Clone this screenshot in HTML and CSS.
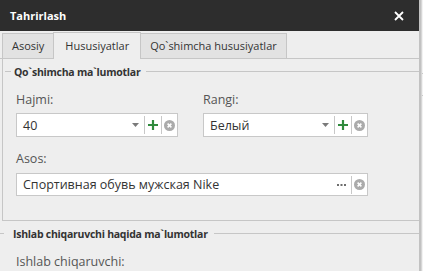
FILE: index.html
```html
<!DOCTYPE html>
<html lang="uz">
<head>
  <meta charset="UTF-8" />
  <meta name="viewport" content="width=device-width, initial-scale=1.0" />
  <title>Tahrirlash</title>
  <link rel="stylesheet" href="styles.css">
</head>
<body>
  <div class="dialog">
    <div class="titlebar">
      <span class="title">Tahrirlash</span>
      <button class="close" title="Yopish">
        <svg width="10" height="10" viewBox="0 0 10 10"><path d="M1 1L9 9M9 1L1 9" stroke="#fff" stroke-width="1.8"/></svg>
      </button>
    </div>

    <div class="tabs">
      <div class="tab">Asosiy</div>
      <div class="tab active">Hususiyatlar</div>
      <div class="tab">Qo`shimcha hususiyatlar</div>
    </div>

    <div class="page">
      <div class="caption"><span>Qo`shimcha ma`lumotlar</span></div>

      <div class="row">
        <div class="field">
          <label>Hajmi:</label>
          <div class="editor">
            <span class="value">40</span>
            <span class="btn arrow"><svg width="7" height="4" viewBox="0 0 7 4"><path d="M0 0H7L3.5 4Z" fill="#7a7a7a"/></svg></span>
            <span class="btn sep plus"><svg width="10" height="10" viewBox="0 0 10 10"><path d="M5 0V10M0 5H10" stroke="#2f8a3c" stroke-width="2.2"/></svg></span>
            <span class="btn sep clear"><svg width="11" height="11" viewBox="0 0 11 11"><circle cx="5.5" cy="5.5" r="5.5" fill="#ababab"/><path d="M3.6 3.6L7.4 7.4M7.4 3.6L3.6 7.4" stroke="#fff" stroke-width="1.5"/></svg></span>
          </div>
        </div>
        <div class="field">
          <label>Rangi:</label>
          <div class="editor">
            <span class="value">Белый</span>
            <span class="btn arrow"><svg width="7" height="4" viewBox="0 0 7 4"><path d="M0 0H7L3.5 4Z" fill="#7a7a7a"/></svg></span>
            <span class="btn sep plus"><svg width="10" height="10" viewBox="0 0 10 10"><path d="M5 0V10M0 5H10" stroke="#2f8a3c" stroke-width="2.2"/></svg></span>
            <span class="btn sep clear"><svg width="11" height="11" viewBox="0 0 11 11"><circle cx="5.5" cy="5.5" r="5.5" fill="#ababab"/><path d="M3.6 3.6L7.4 7.4M7.4 3.6L3.6 7.4" stroke="#fff" stroke-width="1.5"/></svg></span>
          </div>
        </div>
      </div>

      <div class="field wide">
        <label>Asos:</label>
        <div class="editor">
          <span class="value">Спортивная обувь мужская Nike</span>
          <span class="btn dots"><svg width="9" height="2" viewBox="0 0 9 2"><path d="M0 0H2V2H0ZM3.5 0H5.5V2H3.5ZM7 0H9V2H7Z" fill="#6e6e6e"/></svg></span>
          <span class="btn sep clear"><svg width="11" height="11" viewBox="0 0 11 11"><circle cx="5.5" cy="5.5" r="5.5" fill="#ababab"/><path d="M3.6 3.6L7.4 7.4M7.4 3.6L3.6 7.4" stroke="#fff" stroke-width="1.5"/></svg></span>
        </div>
      </div>
    </div>

    <div class="group2">
      <div class="caption"><span>Ishlab chiqaruvchi haqida ma`lumotlar</span></div>
      <label class="label2">Ishlab chiqaruvchi:</label>
    </div>
  </div>
  <div class="behind"></div>
</body>
</html>
```

FILE: styles.css
```css
body {
  margin: 0;
  display: flex;
  height: 271px;
  overflow: hidden;
  background: #f2f2f2;
  font-family: 'Open Sans', 'Noto Sans', sans-serif;
  color: #333;
}
.dialog {
  width: 419px;
  background: #eeeeee;
  border-right: 2px solid #c2c2c2;
  flex-shrink: 0;
}
.behind {
  flex: 1;
  border-left: 1px solid #d6d6d6;
  background: linear-gradient(#f2f2f2 73px, #c9c9c9 73px, #c9c9c9 74px, #f2f2f2 74px, #f2f2f2 95px, #c9c9c9 95px, #c9c9c9 96px, #f2f2f2 96px);
}
.titlebar {
  height: 31px;
  background: #2d2d2d;
  color: #fff;
  display: flex;
  align-items: center;
  justify-content: space-between;
  padding: 0 15px 0 10px;
}
.title {
  font-size: 11px;
  font-weight: bold;
}
.close {
  background: none;
  border: none;
  padding: 0;
  display: flex;
  cursor: pointer;
}
.tabs {
  display: flex;
  align-items: flex-end;
  height: 27px;
  padding-left: 2px;
  border-bottom: 1px solid #c6c6c6;
}
.tab {
  height: 25px;
  box-sizing: border-box;
  padding: 0 9px;
  font-size: 11px;
  line-height: 23px;
  color: #333;
  background: #e2e2e2;
  border: 1px solid #c6c6c6;
  border-bottom: none;
  margin-left: -1px;
}
.tab:first-child {
  margin-left: 0;
}
.tab.active {
  height: 27px;
  line-height: 25px;
  background: #eeeeee;
  margin-bottom: -1px;
  padding: 0 11px;
}
.page {
  box-sizing: border-box;
  margin-left: 2px;
  height: 162px;
  border-left: 1px solid #c6c6c6;
  border-bottom: 1px solid #c6c6c6;
  padding-top: 6px;
}
.caption {
  display: flex;
  align-items: center;
  font-size: 10.5px;
  font-weight: bold;
  letter-spacing: -0.25px;
  color: #333;
  height: 13px;
}
.caption::before {
  content: "";
  width: 6px;
  margin-left: 2px;
  border-top: 1px solid #c6c6c6;
}
.caption::after {
  content: "";
  flex: 1;
  border-top: 1px solid #c6c6c6;
}
.caption span {
  padding: 0 6px 0 3px;
}
.row {
  display: flex;
  gap: 25px;
  padding: 13px 0 0 13px;
}
.field {
  display: flex;
  flex-direction: column;
}
.field label {
  font-size: 12.5px;
  color: #555;
  height: 18px;
  line-height: 18px;
}
.field .editor {
  margin-top: 4px;
}
.row .field:first-child .editor {
  width: 162px;
}
.row .field:last-child .editor {
  width: 165px;
}
.field.wide {
  padding: 13px 0 0 13px;
}
.field.wide .editor {
  width: 352px;
  height: 23px;
  margin-top: 5px;
}
.editor {
  box-sizing: border-box;
  height: 24px;
  display: flex;
  align-items: center;
  background: #fff;
  border: 1px solid #c8c8c8;
}
.value {
  flex: 1;
  padding-left: 6px;
  font-size: 12.5px;
  color: #333;
  white-space: nowrap;
}
.btn {
  display: flex;
  align-items: center;
  justify-content: center;
  width: 16px;
  height: 16px;
}
.btn.arrow {
  width: 17px;
}
.btn.sep {
  border-left: 1px solid #c8c8c8;
  height: 18px;
}
.btn.clear {
  width: 15px;
}
.btn.dots {
  width: 20px;
}
.group2 {
  padding-top: 6px;
}
.group2 .caption::before {
  margin-left: 0;
  width: 4px;
}
.group2 .caption span {
  padding: 0 6px 0 9px;
}
.label2 {
  display: block;
  padding: 13px 0 0 16px;
  font-size: 12.5px;
  line-height: 17px;
  color: #555;
}
```
